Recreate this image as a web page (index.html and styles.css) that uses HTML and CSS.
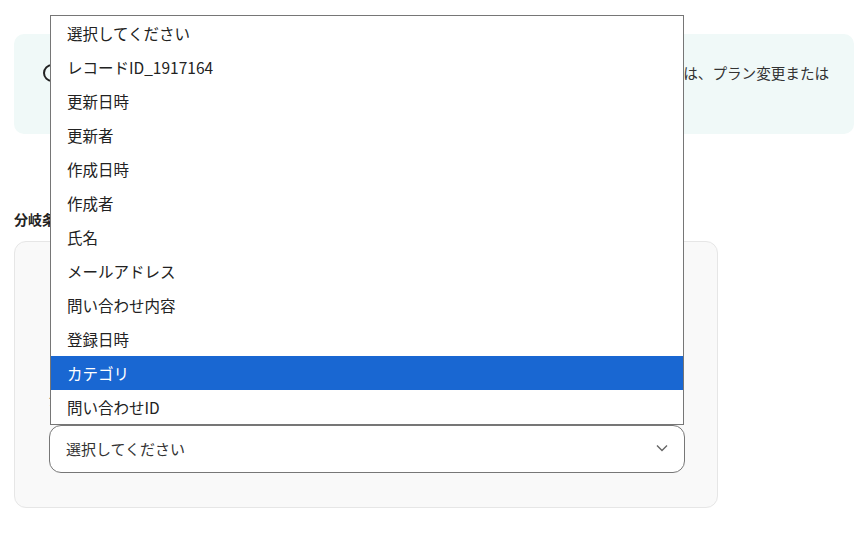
FILE: index.html
```html
<!DOCTYPE html>
<html lang="ja">
<head>
<meta charset="utf-8">
<link rel="stylesheet" href="styles.css">
</head>
<body>
<div class="page">
  <div class="notice">
    <svg class="notice-icon" width="20" height="20" viewBox="0 0 20 20"><circle cx="10" cy="10" r="8" fill="none" stroke="#222" stroke-width="2"/><rect x="9" y="8.5" width="2" height="6" fill="#222"/><rect x="9" y="5" width="2" height="2" fill="#222"/></svg>
    <p class="notice-text">一部のアプリやオペレーションは有料プランでのみご利用いただけます。利用をご希望の場合は、プラン変更または<br>お問い合わせください。</p>
  </div>
  <h3 class="section-label">分岐条件</h3>
  <div class="card">
    <div class="field-label">分岐対象の値</div>
    <div class="select">
      <span>選択してください</span>
      <svg width="14" height="14" viewBox="0 0 14 14"><path d="M2 4.5 L7 9.5 L12 4.5" fill="none" stroke="#666" stroke-width="1.4"/></svg>
    </div>
  </div>
  <ul class="dropdown">
    <li>選択してください</li>
    <li>レコードID_1917164</li>
    <li>更新日時</li>
    <li>更新者</li>
    <li>作成日時</li>
    <li>作成者</li>
    <li>氏名</li>
    <li>メールアドレス</li>
    <li>問い合わせ内容</li>
    <li>登録日時</li>
    <li class="active">カテゴリ</li>
    <li>問い合わせID</li>
  </ul>
</div>
</body>
</html>
```

FILE: styles.css
```css
* { box-sizing: border-box; }
html, body { margin: 0; padding: 0; background: #fff; overflow: hidden; }
body {
  font-family: "Noto Sans CJK JP", "Noto Sans", sans-serif;
  color: #222;
}
.page {
  position: relative;
  width: 854px;
  height: 534px;
  padding: 34px 0 0 14px;
}
.notice {
  width: 840px;
  height: 100px;
  background: #f0f9f8;
  border-radius: 10px;
  display: flex;
  align-items: flex-start;
  padding: 28px 0 0 28px;
  gap: 10px;
}
.notice-icon { flex: none; margin-top: 1px; }
.notice-text {
  margin: 0;
  font-size: 14.6px;
  line-height: 22px;
  color: #333;
  white-space: nowrap;
}
.section-label {
  margin: 74px 0 0 0;
  font-size: 14px;
  font-weight: 700;
  line-height: 22px;
  color: #222;
}
.card {
  margin-top: 11px;
  width: 704px;
  height: 267px;
  background: #f9f9f9;
  border: 1px solid #e6e6e6;
  border-radius: 12px;
  padding: 145px 33px 0 34px;
}
.field-label {
  font-size: 14px;
  line-height: 22px;
  color: #555;
  margin-bottom: 16px;
}
.select {
  width: 636px;
  height: 48px;
  background: #fff;
  border: 1px solid #777;
  border-radius: 12px;
  display: flex;
  align-items: center;
  justify-content: space-between;
  padding: 0 15px 2px 16px;
  font-size: 15px;
  color: #333;
}
.dropdown {
  position: absolute;
  left: 50px;
  top: 15px;
  width: 634px;
  margin: 0;
  padding: 0;
  list-style: none;
  background: #fff;
  border: 1px solid #767676;
}
.dropdown li {
  height: 34px;
  line-height: 34px;
  padding-left: 16px;
  font-size: 15.5px;
  color: #222;
}
.dropdown li.active {
  background: #1967d2;
  color: #fff;
}
```
